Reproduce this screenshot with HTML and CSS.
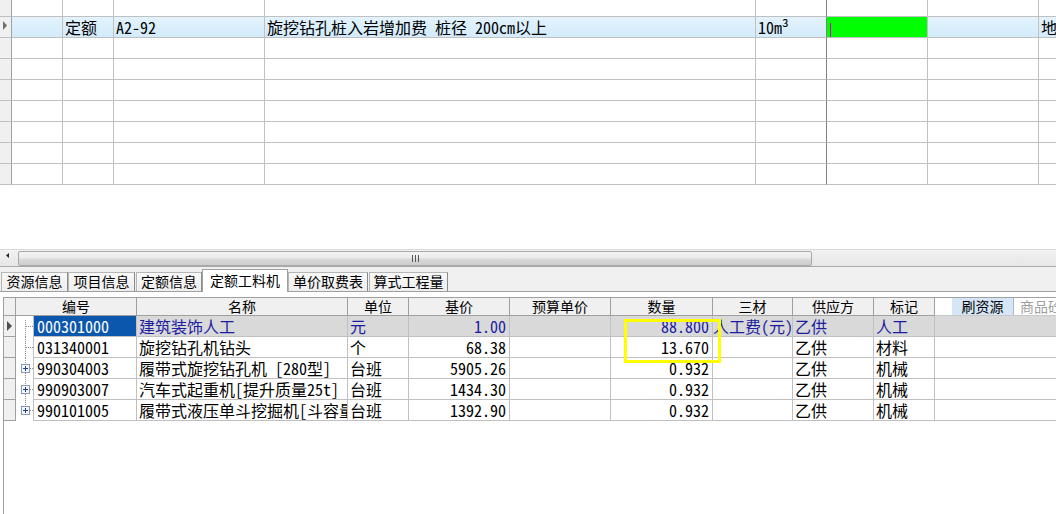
FILE: index.html
```html
<!DOCTYPE html>
<html lang="zh-CN">
<head>
<meta charset="utf-8">
<title>定额工料机</title>
<link rel="stylesheet" href="styles.css">
</head>
<body>
<div class="tgrid">
  <div class="trow first">
    <div class="ind"></div><div></div><div></div><div></div><div></div><div class="frz"></div><div></div><div></div><div></div>
  </div>
  <div class="trow sel">
    <div class="ind"><svg width="11" height="20" viewBox="0 0 11 20"><polygon points="3,4 7,8.5 3,13" fill="#6e6e6e"/></svg></div>
    <div></div>
    <div>定额</div>
    <div>A2-92</div>
    <div>旋挖钻孔桩入岩增加费 桩径 200cm以上</div>
    <div class="frz">10m³</div>
    <div class="green"><span class="caret"></span></div>
    <div></div>
    <div>地</div>
  </div>
  <div class="trow"><div class="ind"></div><div></div><div></div><div></div><div></div><div class="frz"></div><div></div><div></div><div></div></div>
  <div class="trow"><div class="ind"></div><div></div><div></div><div></div><div></div><div class="frz"></div><div></div><div></div><div></div></div>
  <div class="trow"><div class="ind"></div><div></div><div></div><div></div><div></div><div class="frz"></div><div></div><div></div><div></div></div>
  <div class="trow"><div class="ind"></div><div></div><div></div><div></div><div></div><div class="frz"></div><div></div><div></div><div></div></div>
  <div class="trow"><div class="ind"></div><div></div><div></div><div></div><div></div><div class="frz"></div><div></div><div></div><div></div></div>
  <div class="trow"><div class="ind"></div><div></div><div></div><div></div><div></div><div class="frz"></div><div></div><div></div><div></div></div>
  <div class="trow"><div class="ind"></div><div></div><div></div><div></div><div></div><div class="frz"></div><div></div><div></div><div></div></div>
</div>

<div class="gap"></div>

<div class="hscroll">
  <div class="sarrow"><svg width="18" height="16" viewBox="0 0 18 16"><polygon points="9,3 6,5.5 9,8" fill="#222"/></svg></div>
  <div class="thumb">
    <svg width="7" height="7" viewBox="0 0 7 7"><path d="M0.5 0v7M3.5 0v7M6.5 0v7" stroke="#555" stroke-width="1"/></svg>
  </div>
</div>

<div class="tabs">
  <div class="tab t1">资源信息</div>
  <div class="tab t2">项目信息</div>
  <div class="tab t3">定额信息</div>
  <div class="tab active">定额工料机</div>
  <div class="tab t5">单价取费表</div>
  <div class="tab t6">算式工程量</div>
</div>

<div class="panel">
  <div class="g2">
    <div class="hrow">
      <div class="ind"></div>
      <div>编号</div>
      <div>名称</div>
      <div>单位</div>
      <div>基价</div>
      <div>预算单价</div>
      <div>数量</div>
      <div>三材</div>
      <div>供应方</div>
      <div>标记</div>
      <div class="hextra"><span class="btn">刷资源</span><span class="btn2">商品砼</span></div>
    </div>

    <div class="drow sel">
      <div class="ind"><svg width="11" height="20" viewBox="0 0 11 20"><polygon points="3,5 8,10 3,15" fill="#505050"/></svg></div>
      <div class="tree"><svg width="17" height="21" viewBox="0 0 17 21"><path d="M9.5 4V21M10 10.5H17" stroke="#8c8c8c" stroke-dasharray="1 1"/></svg></div>
      <div class="code">000301000</div>
      <div>建筑装饰人工</div>
      <div>元</div>
      <div class="num">1.00</div>
      <div></div>
      <div class="num">88.800</div>
      <div class="np">人工费(元)</div>
      <div>乙供</div>
      <div>人工</div>
      <div class="last"></div>
    </div>

    <div class="drow">
      <div class="ind"></div>
      <div class="tree"><svg width="17" height="21" viewBox="0 0 17 21"><path d="M9.5 0V21M10 10.5H17" stroke="#8c8c8c" stroke-dasharray="1 1"/></svg></div>
      <div class="code">031340001</div>
      <div>旋挖钻孔机钻头</div>
      <div>个</div>
      <div class="num">68.38</div>
      <div></div>
      <div class="num">13.670</div>
      <div></div>
      <div>乙供</div>
      <div>材料</div>
      <div class="last"></div>
    </div>

    <div class="drow">
      <div class="ind"></div>
      <div class="tree"><svg width="17" height="21" viewBox="0 0 17 21"><path d="M9.5 0V6M9.5 15V21M14 10.5H17" stroke="#8c8c8c" stroke-dasharray="1 1"/><rect x="5.5" y="6.5" width="8" height="8" fill="#f4f6fa" stroke="#8898b4"/><path d="M7 10.5H12M9.5 8V13" stroke="#1f3f8f"/></svg></div>
      <div class="code">990304003</div>
      <div>履带式旋挖钻孔机 [280型]</div>
      <div>台班</div>
      <div class="num">5905.26</div>
      <div></div>
      <div class="num">0.932</div>
      <div></div>
      <div>乙供</div>
      <div>机械</div>
      <div class="last"></div>
    </div>

    <div class="drow">
      <div class="ind"></div>
      <div class="tree"><svg width="17" height="21" viewBox="0 0 17 21"><path d="M9.5 0V6M9.5 15V21M14 10.5H17" stroke="#8c8c8c" stroke-dasharray="1 1"/><rect x="5.5" y="6.5" width="8" height="8" fill="#f4f6fa" stroke="#8898b4"/><path d="M7 10.5H12M9.5 8V13" stroke="#1f3f8f"/></svg></div>
      <div class="code">990903007</div>
      <div>汽车式起重机[提升质量25t]</div>
      <div>台班</div>
      <div class="num">1434.30</div>
      <div></div>
      <div class="num">0.932</div>
      <div></div>
      <div>乙供</div>
      <div>机械</div>
      <div class="last"></div>
    </div>

    <div class="drow">
      <div class="ind"></div>
      <div class="tree"><svg width="17" height="21" viewBox="0 0 17 21"><path d="M9.5 0V6M14 10.5H17" stroke="#8c8c8c" stroke-dasharray="1 1"/><rect x="5.5" y="6.5" width="8" height="8" fill="#f4f6fa" stroke="#8898b4"/><path d="M7 10.5H12M9.5 8V13" stroke="#1f3f8f"/></svg></div>
      <div class="code">990101005</div>
      <div>履带式液压单斗挖掘机[斗容量</div>
      <div>台班</div>
      <div class="num">1392.90</div>
      <div></div>
      <div class="num">0.932</div>
      <div></div>
      <div>乙供</div>
      <div>机械</div>
      <div class="last"></div>
    </div>
  </div>
</div>

<div class="hilite"></div>
</body>
</html>
```
FILE: styles.css
```css
* { box-sizing: border-box; }
html, body { margin: 0; padding: 0; }
body {
  width: 1056px;
  height: 514px;
  overflow: hidden;
  position: relative;
  background: #fff;
  color: #000;
  font-family: "Noto Sans Mono CJK SC", "Noto Sans CJK SC", sans-serif;
  font-size: 16px;
}

/* ---------- top grid ---------- */
.tgrid { width: 1056px; overflow: hidden; }
.trow {
  display: grid;
  grid-template-columns: 12px 51px 51px 151px 491px 71px 101px 111px 100px;
  height: 21px;
}
.trow.first { height: 17px; }
.trow > div {
  border-right: 1px solid #c0c0c0;
  border-bottom: 1px solid #c0c0c0;
  padding-left: 2px;
  line-height: 20px;
  white-space: nowrap;
  overflow-x: clip;
  overflow-y: visible;
}
.trow > .ind { background: #f0f0f0; border-right-color: #a0a0a0; padding: 0; }
.trow > .frz { border-right-color: #808080; }
.trow.sel > div { background: linear-gradient(#e3f3fd, #d3ebfb); }
.trow.sel > .ind { background: #f0f0f0; }
.trow.sel > .green { background: #00ff00; padding-left: 3px; }
.ind svg { display: block; }
.caret {
  display: inline-block;
  width: 1px;
  height: 14px;
  background: #d000d0;
  vertical-align: middle;
}

.gap { height: 64px; }

/* ---------- horizontal scrollbar ---------- */
.hscroll {
  height: 17px;
  background: linear-gradient(#f2f2f2, #e6e6e6);
  border-top: 1px solid #dadada;
  display: flex;
  align-items: center;
}
.sarrow { width: 18px; height: 16px; }
.sarrow svg { display: block; }
.thumb {
  width: 794px;
  height: 15px;
  border: 1px solid #a9a9a9;
  border-radius: 2px;
  background: linear-gradient(#f4f4f4 0%, #ebebeb 45%, #dadada 55%, #cdcdcd 100%);
  display: flex;
  align-items: center;
  justify-content: center;
}

/* ---------- tabs ---------- */
.tabs {
  height: 26px;
  border-top: 1px solid #a8a8a8;
  border-bottom: 1px solid #a0a0a0;
  background: #f0f0f0;
  display: flex;
  align-items: flex-end;
}
.tab {
  height: 19px;
  font-size: 14px;
  line-height: 17px;
  text-align: center;
  white-space: nowrap;
  background: linear-gradient(#f8f8f8, #eeeeee);
  border: 1px solid #b6b6b6;
  border-right-color: #8a8a8a;
  border-bottom: none;
}
.t1 { width: 67px; margin-left: 1px; }
.t2 { width: 67px; }
.t3 { width: 66px; margin-left: 1px; }
.active {
  width: 86px;
  height: 23px;
  margin-bottom: -1px;
  background: #fff;
  border-color: #a0a0a0;
  line-height: 20px;
}
.t5 { width: 80px; }
.t6 { width: 79px; margin-left: 1px; }

/* ---------- bottom grid ---------- */
.panel { padding: 5px 0 0 3px; height: 222px; }
.g2 { border-left: 1px solid #a0a0a0; height: 217px; }

.hrow {
  display: grid;
  grid-template-columns: 12px 121px 211px 61px 101px 101px 102px 80px 81px 61px 1fr;
  height: 19px;
  border-top: 1px solid #a0a0a0;
}
.hrow > div {
  background: #f0f0f0;
  border-right: 1px solid #a0a0a0;
  border-bottom: 1px solid #a0a0a0;
  font-size: 14px;
  line-height: 17px;
  text-align: center;
  white-space: nowrap;
  overflow-x: clip;
  overflow-y: visible;
}
.hrow > .hextra {
  background: #fff;
  border-right: none;
  border-bottom-color: #c8c8c8;
  text-align: left;
  padding-left: 17px;
  display: flex;
}
.btn {
  width: 62px;
  background: #d6e6f7;
  border-right: 1px solid #a8b8cc;
  text-align: center;
}
.btn2 { padding-left: 6px; color: #a0a0a0; }

.drow {
  display: grid;
  grid-template-columns: 12px 18px 103px 211px 61px 101px 101px 102px 80px 81px 61px 1fr;
  height: 21px;
}
.drow > div {
  border-right: 1px solid #c0c0c0;
  border-bottom: 1px solid #c0c0c0;
  padding-left: 2px;
  line-height: 20px;
  white-space: nowrap;
  overflow-x: clip;
  overflow-y: visible;
}
.drow > .ind {
  background: #f0f0f0;
  border-right-color: #a0a0a0;
  border-bottom-color: #a0a0a0;
  padding: 0;
}
.drow > .tree { border-bottom: none; padding: 0; }
.tree svg { display: block; }
.drow > .code { padding-left: 3px; }
.drow > .num { text-align: right; padding-right: 3px; padding-left: 0; }
.drow > .np { padding-left: 0; }
.drow > .last { border-right: none; }

.drow.sel > div { background: #d9d9d9; color: #1c1ca0; }
.drow.sel > .ind { background: #f0f0f0; }
.drow.sel > .tree { background: #fff; }
.drow.sel > .code { background: #0b57ad; color: #fff; }

/* highlight box drawn over the quantity column */
.hilite {
  position: absolute;
  left: 624px;
  top: 319px;
  width: 97px;
  height: 44px;
  border: 3px solid #ffff00;
}
```
